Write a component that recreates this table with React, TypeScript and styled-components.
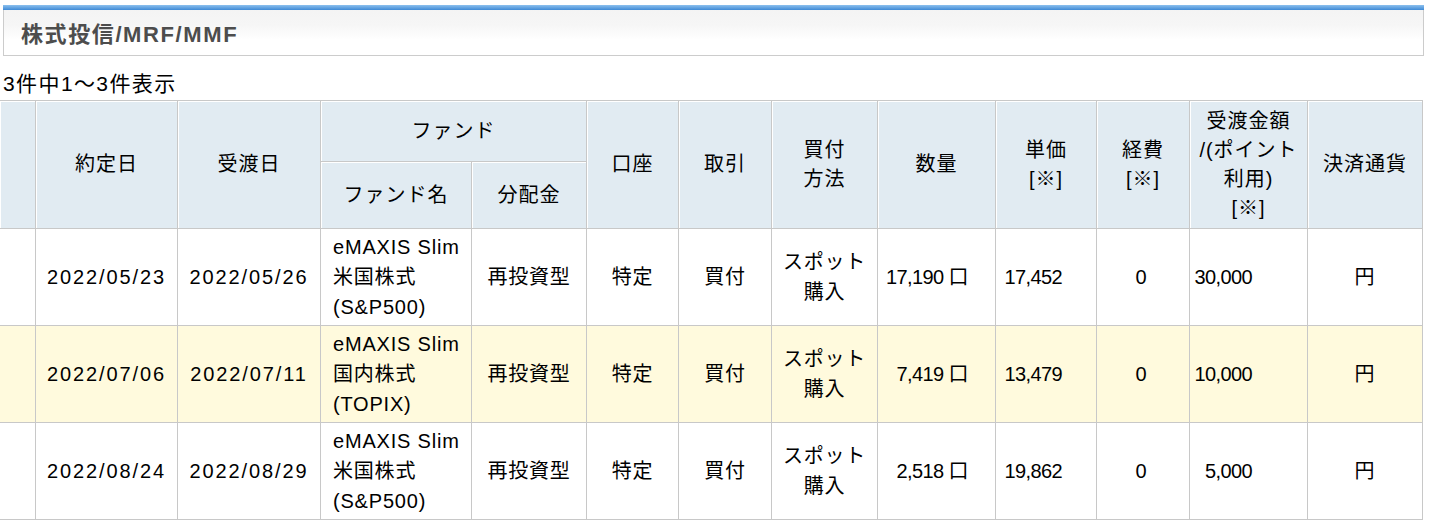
import React from "react";
import styled, { createGlobalStyle } from "styled-components";

const GlobalStyle = createGlobalStyle`
  html, body { margin: 0; padding: 0; background: #fff; }
  body {
    font-family: "Liberation Sans", "Noto Sans CJK JP", sans-serif;
    color: #000;
  }
`;

const Page = styled.div`
  width: 1430px;
  padding-top: 5px;
`;

const TitleBox = styled.div`
  margin-left: 3px;
  width: 1419px;
  height: 50px;
  border: 1px solid #cccccc;
  border-top: none;
  background: linear-gradient(#f3f3f3 0%, #f6f6f6 40%, #ffffff 70%);
  display: flex;
  flex-direction: column;
`;

const BlueBar = styled.div`
  height: 5px;
  margin: 0 -1px;
  background: linear-gradient(#8cc0ee, #3f8ad6);
`;

const Title = styled.h2`
  margin: 0;
  flex: 1;
  display: flex;
  align-items: center;
  padding-left: 17px;
  padding-bottom: 2px;
  font-size: 22px;
  font-weight: bold;
  color: #4d4d4d;
  letter-spacing: 1.6px;
`;

const Count = styled.div`
  height: 44px;
  padding-left: 3px;
  display: flex;
  align-items: center;
  font-size: 21px;
  letter-spacing: 1.4px;
  padding-top: 8px;
  box-sizing: border-box;
`;

const Table = styled.table`
  border-collapse: collapse;
  table-layout: fixed;
  width: 1424px;
  margin-left: -1px;
  font-size: 20px;
`;

const Th = styled.th`
  background: #e1ebf2;
  border: 1px solid #c8c8c8;
  box-shadow: inset 1px 1px 0 #ffffff;
  font-weight: normal;
  text-align: center;
  vertical-align: middle;
  line-height: 29px;
  letter-spacing: 1px;
  padding: 0 4px;
`;

const Tr = styled.tr<{ $alt?: boolean; $h: number }>`
  height: ${(p) => p.$h}px;
  background: ${(p) => (p.$alt ? "#fffadd" : "#ffffff")};
`;

type Kind = "text" | "date" | "num";

const Td = styled.td<{ $align?: "left" | "center" | "right"; $pr?: number; $kind?: Kind }>`
  border: 1px solid #c8c8c8;
  text-align: ${(p) => p.$align || "center"};
  vertical-align: middle;
  line-height: 30px;
  letter-spacing: ${(p) => (p.$kind === "date" ? "1.9px" : p.$kind === "num" ? "-0.6px" : "0.8px")};
  padding: 0 ${(p) => p.$pr ?? 6}px 0
    ${(p) => (p.$align === "left" ? 12 : p.$align === "right" ? 0 : 6)}px;
  white-space: nowrap;
`;

const widths = [36, 142, 143, 151, 115, 92, 93, 106, 118, 101, 93, 118, 115];

type Row = {
  yakujo: string;
  ukewatashi: string;
  fund: [string, string, string];
  qty: string;
  price: string;
  fee: string;
  amount: string;
};

const rows: Row[] = [
  {
    yakujo: "2022/05/23",
    ukewatashi: "2022/05/26",
    fund: ["eMAXIS Slim", "米国株式", "(S&P500)"],
    qty: "17,190 口",
    price: "17,452",
    fee: "0",
    amount: "30,000",
  },
  {
    yakujo: "2022/07/06",
    ukewatashi: "2022/07/11",
    fund: ["eMAXIS Slim", "国内株式", "(TOPIX)"],
    qty: "7,419 口",
    price: "13,479",
    fee: "0",
    amount: "10,000",
  },
  {
    yakujo: "2022/08/24",
    ukewatashi: "2022/08/29",
    fund: ["eMAXIS Slim", "米国株式", "(S&P500)"],
    qty: "2,518 口",
    price: "19,862",
    fee: "0",
    amount: "5,000",
  },
];

export default function App() {
  return (
    <Page>
      <GlobalStyle />
      <TitleBox>
        <BlueBar />
        <Title>株式投信/MRF/MMF</Title>
      </TitleBox>
      <Count>3件中1～3件表示</Count>
      <Table>
        <colgroup>
          {widths.map((w, i) => (
            <col key={i} style={{ width: w }} />
          ))}
        </colgroup>
        <thead>
          <Tr $h={61}>
            <Th rowSpan={2}></Th>
            <Th rowSpan={2}>約定日</Th>
            <Th rowSpan={2}>受渡日</Th>
            <Th colSpan={2}>ファンド</Th>
            <Th rowSpan={2}>口座</Th>
            <Th rowSpan={2}>取引</Th>
            <Th rowSpan={2}>
              買付
              <br />
              方法
            </Th>
            <Th rowSpan={2}>数量</Th>
            <Th rowSpan={2}>
              単価
              <br />
              [※]
            </Th>
            <Th rowSpan={2}>
              経費
              <br />
              [※]
            </Th>
            <Th rowSpan={2}>
              受渡金額
              <br />
              /(ポイント
              <br />
              利用)
              <br />
              [※]
            </Th>
            <Th rowSpan={2}>決済通貨</Th>
          </Tr>
          <Tr $h={67}>
            <Th>ファンド名</Th>
            <Th>分配金</Th>
          </Tr>
        </thead>
        <tbody>
          {rows.map((r, i) => (
            <Tr key={i} $h={97} $alt={i === 1}>
              <Td></Td>
              <Td $kind="date">{r.yakujo}</Td>
              <Td $kind="date">{r.ukewatashi}</Td>
              <Td $align="left">
                {r.fund[0]}
                <br />
                {r.fund[1]}
                <br />
                {r.fund[2]}
              </Td>
              <Td>再投資型</Td>
              <Td>特定</Td>
              <Td>買付</Td>
              <Td>
                スポット
                <br />
                購入
              </Td>
              <Td $kind="num" $align="right" $pr={27}>{r.qty}</Td>
              <Td $kind="num" $align="right" $pr={34}>{r.price}</Td>
              <Td $kind="num" $align="right" $pr={43}>{r.fee}</Td>
              <Td $kind="num" $align="right" $pr={55}>{r.amount}</Td>
              <Td>円</Td>
            </Tr>
          ))}
        </tbody>
      </Table>
    </Page>
  );
}
